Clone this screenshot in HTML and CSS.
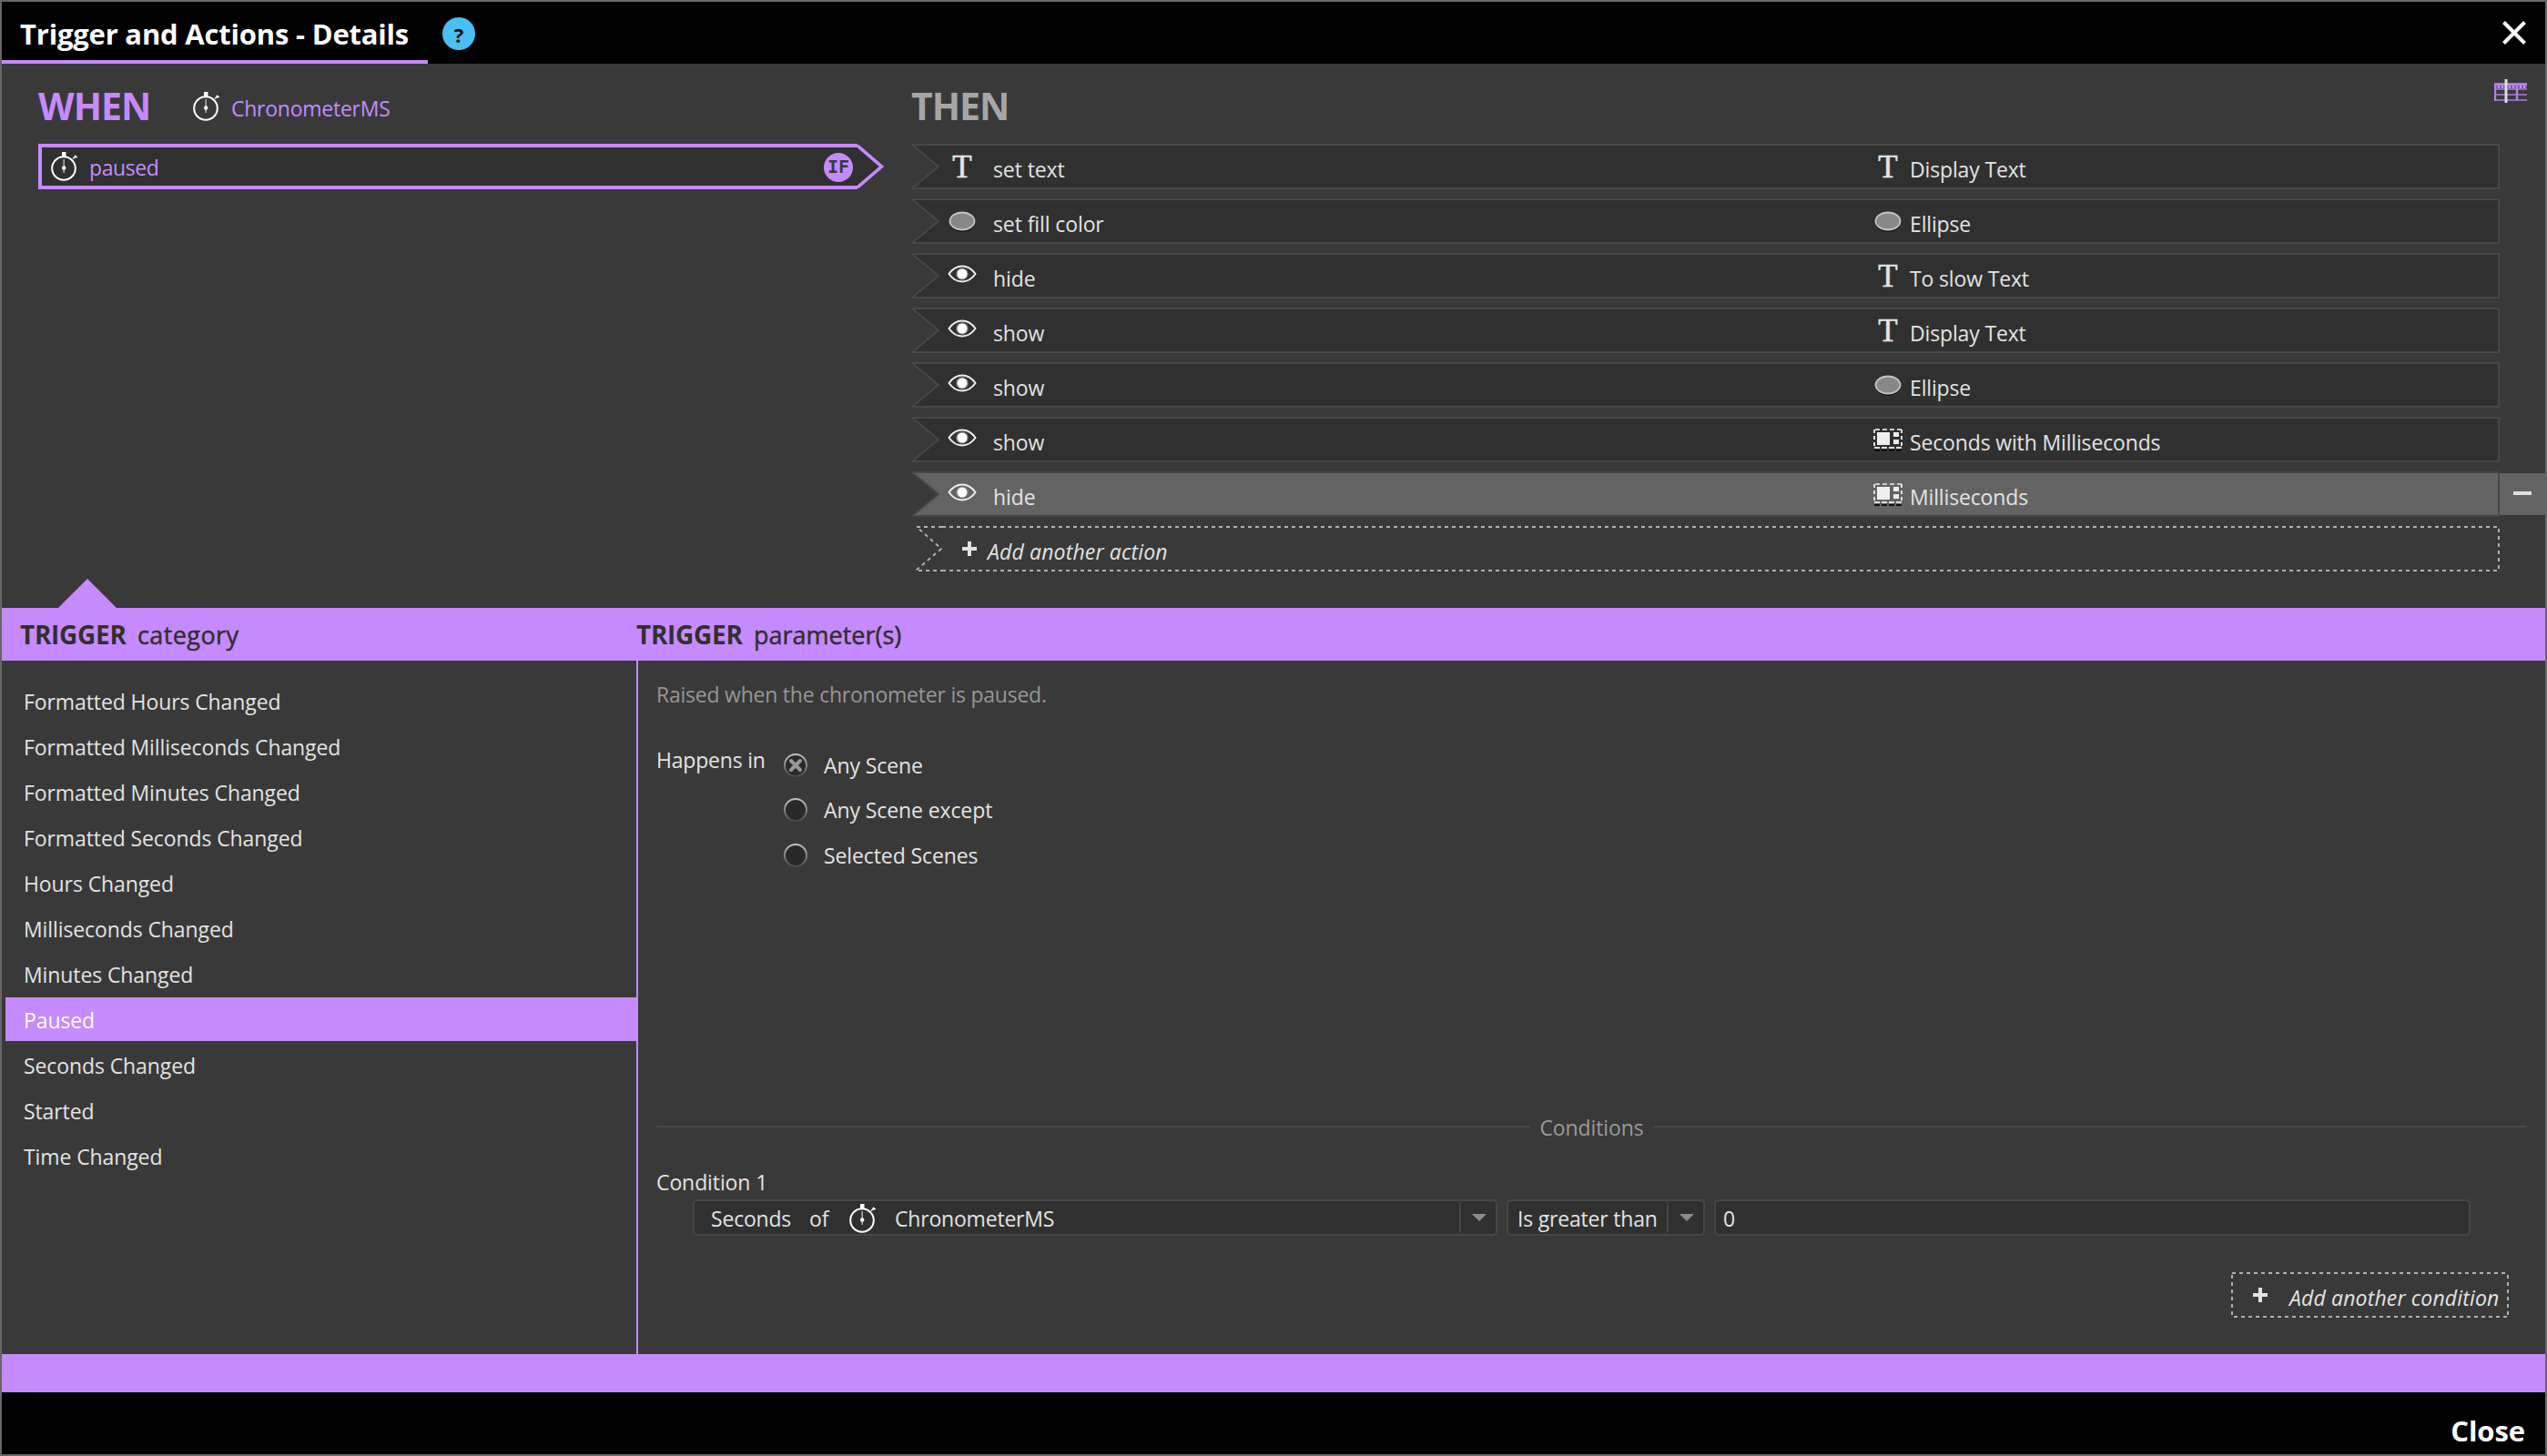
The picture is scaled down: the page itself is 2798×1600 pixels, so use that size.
FILE: index.html
```html
<!DOCTYPE html>
<html lang="en">

<head>
    <meta charset="UTF-8">
    <meta name="viewport" content="width=device-width, initial-scale=1.0">
    <title>Trigger and Actions - Details</title>
    <link rel="stylesheet" href="styles.css">
</head>

<body>
    <!-- shared icons -->
    <svg class="defs" width="0" height="0">
        <symbol id="chrono" viewBox="0 0 30 32">
            <circle cx="14" cy="18" r="12.800" fill="none" stroke="#fff" stroke-width="2" />
            <path d="M12 0h4.500v5h-4.500z" fill="#fff" />
            <path d="M25 6l1.200-2.800 3.300 2.600-3 1z" fill="#fff" />
            <path d="M24 7.500l2-2" stroke="#fff" stroke-width="1.200" />
            <path d="M14.200 8v15" stroke="#aaa" stroke-width="1.600" />
            <circle cx="14.200" cy="17.500" r="2.200" fill="#fff" />
        </symbol>
        <symbol id="eye" viewBox="0 0 32 20">
            <path d="M1.500 10C5 5 10 1.500 16 1.500S27 5 30.500 10C27 15 22 18.500 16 18.500S5 15 1.500 10z" fill="none"
                stroke="#eee" stroke-width="2" />
            <circle cx="16" cy="10" r="6.800" fill="#777" />
            <circle cx="16" cy="10" r="5.500" fill="#fff" />
        </symbol>
        <symbol id="oval" viewBox="0 0 30 24">
            <ellipse cx="15" cy="13" rx="13.500" ry="9.800" fill="#111" />
            <ellipse cx="15" cy="11" rx="13.500" ry="9.500" fill="#888" stroke="#c4c4c4" stroke-width="1.800" />
        </symbol>
        <symbol id="group" viewBox="0 0 32 26">
            <path d="M1 25h30" stroke="#111" stroke-width="2" stroke-dasharray="6 2" />
            <path d="M1 2h30" stroke="#ccc" stroke-width="2" stroke-dasharray="5 3" stroke-dashoffset="-1" />
            <path d="M1 22h30" stroke="#ddd" stroke-width="2" stroke-dasharray="6 2" />
            <path d="M1 2v20M31 2v20" stroke="#ddd" stroke-width="2" stroke-dasharray="4 3" />
            <path d="M4 5h14v14H4zM22 5h6v5h-6zM22 13h6v5h-6z" fill="#eee" />
        </symbol>
        <symbol id="notch" viewBox="0 0 32 50">
            <path d="M1 1H32V49H1L30 25z" fill="currentColor" />
            <path d="M32 1H1L30 25L1 49H32" fill="none" stroke="#474747" stroke-width="2" />
        </symbol>
        <symbol id="plus" viewBox="0 0 16 16">
            <path d="M6 0h4v6h6v4h-6v6H6v-6H0V6h6z" fill="#e3e3e3" />
        </symbol>
    </svg>

    <div class="window">
        <div class="header">
            <div class="tab">Trigger and Actions - Details</div>
            <div class="help">?</div>
            <svg class="close-x" viewBox="0 0 26 26">
                <path d="M1.500 1.500l23 23M24.500 1.500l-23 23" stroke="#fff" stroke-width="4" />
            </svg>
        </div>

        <div class="top">
            <div class="when">
                <div class="heading">
                    <h2>WHEN</h2>
                    <svg class="chrono"><use href="#chrono" /></svg>
                    <span class="name">ChronometerMS</span>
                </div>
                <div class="trigger">
                    <div class="trigger-body">
                        <svg class="chrono"><use href="#chrono" /></svg>
                        <span class="trigger-name">paused</span>
                        <span class="if">IF</span>
                    </div>
                    <svg class="tip" viewBox="0 0 30 50">
                        <path d="M0 2L27 25L0 48z" fill="#303030" />
                        <path d="M0 2L26.500 25L0 48" fill="none" stroke="#c68aff" stroke-width="3.600" />
                    </svg>
                </div>
            </div>

            <div class="then">
                <div class="heading">
                    <h2>THEN</h2>
                    <svg class="timeline" viewBox="0 0 36 26">
                        <path d="M0 4h36v7H0z" fill="#7f5aa3" />
                        <path d="M0 5.500h36" stroke="#c68aff" stroke-width="2" />
                        <path d="M4 8.500h32" stroke="#c68aff" stroke-width="4" stroke-dasharray="2 2" />
                        <path d="M0 11h36M0 17h36M0 23h36" stroke="#9369b8" stroke-width="2" />
                        <path d="M1 5v19M25 5v18" stroke="#b57ee8" stroke-width="2.400" />
                        <path d="M13 0v26" stroke="#ddd" stroke-width="3" />
                    </svg>
                </div>
                <div class="row">
                    <svg class="notch"><use href="#notch" /></svg>
                    <div class="row-body">
                        <span class="icon letter">T</span><span class="action">set text</span>
                        <span class="icon letter">T</span><span class="target">Display Text</span>
                    </div>
                </div>
                <div class="row">
                    <svg class="notch"><use href="#notch" /></svg>
                    <div class="row-body">
                        <span class="icon"><svg class="oval"><use href="#oval" /></svg></span><span class="action">set fill color</span>
                        <span class="icon"><svg class="oval"><use href="#oval" /></svg></span><span class="target">Ellipse</span>
                    </div>
                </div>
                <div class="row">
                    <svg class="notch"><use href="#notch" /></svg>
                    <div class="row-body">
                        <span class="icon"><svg class="eye"><use href="#eye" /></svg></span><span class="action">hide</span>
                        <span class="icon letter">T</span><span class="target">To slow Text</span>
                    </div>
                </div>
                <div class="row">
                    <svg class="notch"><use href="#notch" /></svg>
                    <div class="row-body">
                        <span class="icon"><svg class="eye"><use href="#eye" /></svg></span><span class="action">show</span>
                        <span class="icon letter">T</span><span class="target">Display Text</span>
                    </div>
                </div>
                <div class="row">
                    <svg class="notch"><use href="#notch" /></svg>
                    <div class="row-body">
                        <span class="icon"><svg class="eye"><use href="#eye" /></svg></span><span class="action">show</span>
                        <span class="icon"><svg class="oval"><use href="#oval" /></svg></span><span class="target">Ellipse</span>
                    </div>
                </div>
                <div class="row">
                    <svg class="notch"><use href="#notch" /></svg>
                    <div class="row-body">
                        <span class="icon"><svg class="eye"><use href="#eye" /></svg></span><span class="action">show</span>
                        <span class="icon"><svg class="group"><use href="#group" /></svg></span><span class="target">Seconds with Milliseconds</span>
                    </div>
                </div>
                <div class="row active">
                    <svg class="notch"><use href="#notch" /></svg>
                    <div class="row-body">
                        <span class="icon"><svg class="eye"><use href="#eye" /></svg></span><span class="action">hide</span>
                        <span class="icon"><svg class="group"><use href="#group" /></svg></span><span class="target">Milliseconds</span>
                    </div>
                    <div class="remove"></div>
                </div>
                <div class="row add-action">
                    <svg class="add-notch" viewBox="0 0 30 50">
                        <path d="M30 1H2L29 25L1 49H30" fill="none" stroke="#b0b0b0" stroke-width="2"
                            stroke-dasharray="4 4" />
                    </svg>
                    <div class="add-body dashed">
                        <svg class="plus"><use href="#plus" /></svg>
                        <span>Add another action</span>
                    </div>
                </div>
            </div>
        </div>

        <div class="band">
            <svg class="pointer" viewBox="0 0 64 32"><path d="M0 32L32 0L64 32z" fill="#c68aff" /></svg>
            <div class="band-title left"><b>TRIGGER</b><span>category</span></div>
            <div class="band-title"><b>TRIGGER</b><span>parameter(s)</span></div>
        </div>

        <div class="bottom">
            <ul class="categories">
                <li>Formatted Hours Changed</li>
                <li>Formatted Milliseconds Changed</li>
                <li>Formatted Minutes Changed</li>
                <li>Formatted Seconds Changed</li>
                <li>Hours Changed</li>
                <li>Milliseconds Changed</li>
                <li>Minutes Changed</li>
                <li class="selected">Paused</li>
                <li>Seconds Changed</li>
                <li>Started</li>
                <li>Time Changed</li>
            </ul>

            <div class="params">
                <div class="desc">Raised when the chronometer is paused.</div>
                <div class="happens">
                    <div class="label">Happens in</div>
                    <div class="radios">
                        <div class="radio"><span class="dot"><svg viewBox="0 0 16 16"><path d="M3 3l10 10M13 3L3 13" stroke="#999" stroke-width="4" stroke-linecap="round" /></svg></span>Any Scene</div>
                        <div class="radio"><span class="dot"></span>Any Scene except</div>
                        <div class="radio"><span class="dot"></span>Selected Scenes</div>
                    </div>
                </div>

                <div class="divider"><span>Conditions</span></div>
                <div class="cond-label">Condition 1</div>
                <div class="fields">
                    <div class="field subject">
                        <div class="value">
                            <span class="prop">Seconds</span>
                            <span class="of">of</span>
                            <svg class="chrono"><use href="#chrono" /></svg>
                            <span>ChronometerMS</span>
                        </div>
                        <div class="arrow"></div>
                    </div>
                    <div class="field operator">
                        <div class="value">Is greater than</div>
                        <div class="arrow"></div>
                    </div>
                    <div class="field number">0</div>
                </div>
                <div class="add-condition dashed">
                    <svg class="plus"><use href="#plus" /></svg>
                    <span>Add another condition</span>
                </div>
            </div>
        </div>

        <div class="strip"></div>
        <div class="footer">Close</div>
    </div>
</body>

</html>
```
FILE: styles.css
```css
* {
    box-sizing: border-box;
}

body {
    margin: 0;
    font-family: 'Open Sans', 'Noto Sans', sans-serif;
    font-size: 23px;
    letter-spacing: -0.1px;
    color: #e3e3e3;
    background: #393939;
}

svg {
    display: block;
    flex-shrink: 0;
}

.defs {
    position: absolute;
}

.window {
    width: 2798px;
    height: 1600px;
    border: 2px solid #666;
    display: flex;
    flex-direction: column;
    white-space: nowrap;
}

.header {
    height: 68px;
    background: #000;
    display: flex;
    align-items: center;
    padding-right: 21px;
}

.tab {
    width: 468px;
    height: 68px;
    padding: 8px 0 0 20px;
    border-bottom: 4px solid #c68aff;
    font-size: 31px;
    line-height: 54px;
    font-weight: 700;
    letter-spacing: -0.2px;
    color: #fff;
}

.help {
    width: 36px;
    height: 36px;
    margin: 2px 0 0 16px;
    border-radius: 50%;
    background: #48bff5;
    color: #000;
    font-size: 22px;
    line-height: 38px;
    font-weight: 700;
    text-align: center;
}

.close-x {
    width: 26px;
    height: 26px;
    margin-left: auto;
}

/* when / then */
.top {
    height: 598px;
    display: grid;
    grid-template-columns: 999px 1fr;
}

.when {
    padding-left: 40px;
}

.heading {
    height: 88px;
    padding-top: 2px;
    display: flex;
    align-items: center;
}

h2 {
    margin: 1px 0 0;
    font-size: 41px;
    line-height: 50px;
    font-weight: 700;
    letter-spacing: -1px;
}

.when h2 {
    width: 170px;
    color: #c68aff;
}

.then h2 {
    color: #a6a6a6;
}

.chrono {
    width: 30px;
    height: 32px;
}

.heading .chrono {
    margin-top: 3px;
}

.name {
    margin: 8px 0 0 12px;
    letter-spacing: -0.25px;
    color: #c68aff;
}

.trigger {
    display: flex;
}

.trigger-body {
    width: 900px;
    height: 50px;
    border: 4px solid #c68aff;
    border-right: none;
    background: #303030;
    display: flex;
    align-items: center;
    padding: 0 5px 0 10px;
}

.trigger-name {
    margin: 2px 0 0 12px;
    letter-spacing: -0.4px;
    color: #c68aff;
}

.if {
    width: 32px;
    height: 32px;
    margin: 2px 0 0 auto;
    border-radius: 50%;
    background: #c68aff;
    color: #393939;
    font: bold 20px/31px 'DejaVu Sans Mono', monospace;
    text-align: center;
}

.tip {
    width: 30px;
    height: 50px;
}

.timeline {
    width: 36px;
    height: 26px;
    margin: 0 20px 30px auto;
}

.row {
    display: flex;
    height: 50px;
    margin-bottom: 10px;
}

.notch {
    width: 32px;
    height: 50px;
    color: #303030;
}

.row-body {
    width: 1713px;
    border: 2px solid #474747;
    border-left: none;
    background: #303030;
    display: grid;
    grid-template-columns: 50px 967px 40px 1fr;
    align-items: center;
    padding-left: 8px;
}

.action,
.target {
    padding-top: 5px;
}

.target {
    letter-spacing: -0.15px;
}

.icon {
    width: 32px;
    display: flex;
    justify-content: center;
}

.letter {
    padding-top: 2px;
    font: 35px/44px 'Liberation Serif', serif;
    -webkit-text-stroke: 0.6px #e3e3e3;
}

.eye {
    width: 32px;
    height: 20px;
    margin-bottom: 4px;
}

.oval {
    width: 30px;
    height: 24px;
    margin-top: 2px;
}

.group {
    width: 32px;
    height: 26px;
}

.active .notch {
    color: #636363;
}

.active .row-body {
    background: #636363;
}

.remove {
    width: 50px;
    height: 46px;
    margin-top: 2px;
    background: linear-gradient(#e0e0e0, #e0e0e0) 15px 20px / 20px 4px no-repeat #636363;
}

.add-notch {
    width: 30px;
    height: 50px;
    margin-left: 4px;
}

.add-body {
    width: 1711px;
    display: flex;
    align-items: center;
    gap: 12px;
    padding-left: 22px;
    font-style: italic;
    letter-spacing: 0.15px;
}

.plus {
    width: 16px;
    height: 16px;
    margin-bottom: 1px;
}

.add-body span {
    padding-top: 6px;
}

.dashed {
    --dash: #b0b0b0 0 4px, transparent 4px 8px;
    background:
        repeating-linear-gradient(90deg, var(--dash)) 0 0 / 100% 2px no-repeat,
        repeating-linear-gradient(90deg, var(--dash)) 0 100% / 100% 2px no-repeat,
        repeating-linear-gradient(180deg, var(--dash)) 100% 3px / 2px 100% no-repeat;
}

/* purple band */
.band {
    position: relative;
    height: 58px;
    background: #c68aff;
    display: flex;
    color: #303030;
    font-size: 28px;
    line-height: 58px;
}

.pointer {
    position: absolute;
    left: 62px;
    top: -32px;
    width: 64px;
    height: 32px;
}

.band-title {
    display: flex;
}

.band-title b {
    width: 129px;
    letter-spacing: -0.3px;
}

.band-title span {
    padding-top: 1px;
    font-size: 27px;
    letter-spacing: 0;
    -webkit-text-stroke: 0.5px #303030;
}

.left {
    width: 697px;
    padding-left: 20px;
}

.left span {
    letter-spacing: 0.4px;
}

.bottom {
    height: 762px;
    display: flex;
}

.categories {
    width: 697px;
    margin: 0;
    padding: 20px 0 0 4px;
    list-style: none;
}

.categories li {
    height: 48px;
    margin-bottom: 2px;
    padding: 2px 0 0 20px;
    line-height: 46px;
}

.categories .selected {
    background: #c68aff;
    color: #fff;
}

.params {
    flex: 1;
    border-left: 2px solid #c68aff;
    padding: 22px 20px 40px;
    display: flex;
    flex-direction: column;
}

.desc {
    line-height: 30px;
    letter-spacing: -0.23px;
    color: #969696;
}

.happens {
    display: flex;
    margin-top: 42px;
}

.label {
    width: 140px;
    line-height: 30px;
    letter-spacing: -0.2px;
}

.radios {
    padding-top: 8px;
    display: flex;
    flex-direction: column;
    gap: 23px;
}

.radio {
    display: flex;
    align-items: center;
    gap: 18px;
    height: 26px;
}

.radio:last-child {
    margin-top: 1px;
}

/* ring fades from light to dark */
.dot {
    width: 26px;
    height: 26px;
    padding: 5px;
    border: 2px solid transparent;
    border-radius: 50%;
    background:
        linear-gradient(#292929, #292929) padding-box,
        linear-gradient(#c8c8c8, #444) border-box;
}

.dot svg {
    width: 16px;
    height: 16px;
    margin: -2px;
}

.divider {
    margin: auto 0 31px;
    height: 30px;
    display: flex;
    align-items: center;
    gap: 10px;
    color: #999;
}

.divider::before,
.divider::after {
    content: '';
    flex: 1;
    height: 2px;
    background: #474747;
}

.divider span {
    padding-top: 2px;
    line-height: 28px;
}

.cond-label {
    line-height: 30px;
    margin-bottom: 4px;
}

.fields {
    display: flex;
    gap: 10px;
    margin-left: 40px;
}

.field {
    height: 40px;
    border: 2px solid #474747;
    border-radius: 5px;
    background: #303030;
    display: flex;
    line-height: 36px;
}

.subject {
    width: 884px;
}

.operator {
    width: 218px;
}

.number {
    width: 831px;
    padding: 1px 0 0 8px;
}

.value {
    flex: 1;
    display: flex;
    align-items: center;
    border-right: 2px solid #474747;
    border-radius: 0 5px 5px 0;
    padding: 1px 0 0 10px;
    letter-spacing: -0.2px;
}

.subject .value {
    padding-left: 18px;
}

.prop {
    width: 108px;
}

.of {
    width: 44px;
}

.subject .chrono {
    margin-right: 20px;
}

.arrow {
    width: 38px;
}

.arrow::before {
    content: '';
    display: block;
    width: 0;
    margin: 14px 0 0 12px;
    border: 8px solid transparent;
    border-top-color: #8c8c8c;
    border-bottom: none;
}

.add-condition {
    width: 305px;
    height: 50px;
    margin: 40px 20px 0 auto;
    display: flex;
    align-items: center;
    gap: 24px;
    padding-left: 24px;
    font-style: italic;
    letter-spacing: 0.15px;
    background:
        repeating-linear-gradient(90deg, var(--dash)) 1px 0 / 100% 2px no-repeat,
        repeating-linear-gradient(90deg, var(--dash)) 3px 100% / 100% 2px no-repeat,
        repeating-linear-gradient(180deg, var(--dash)) 0 3px / 2px 100% no-repeat,
        repeating-linear-gradient(180deg, var(--dash)) 100% 3px / 2px 100% no-repeat;
}

.add-condition span {
    padding-top: 5px;
}

.strip {
    height: 42px;
    background: #c68aff;
}

.footer {
    height: 68px;
    background: #000;
    padding: 10px 22px 0 0;
    color: #fff;
    font-size: 31px;
    line-height: 64px;
    font-weight: 700;
    text-align: right;
}
```
